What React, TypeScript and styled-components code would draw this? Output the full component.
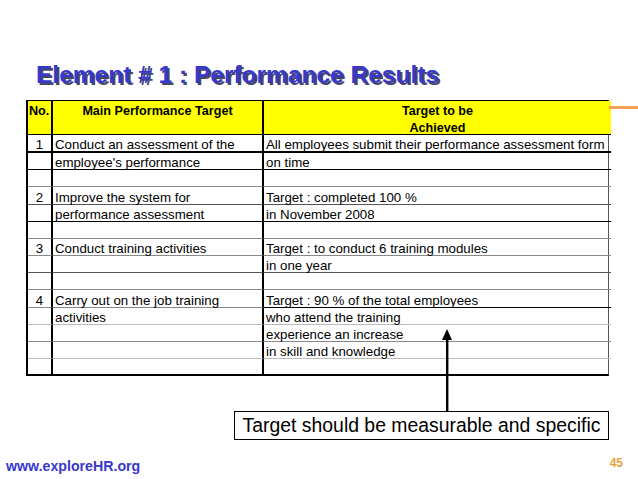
import React from "react";
import styled, { createGlobalStyle } from "styled-components";

const Global = createGlobalStyle`
  html, body { margin: 0; padding: 0; background: #ffffff; }
  body { font-family: "Liberation Sans", Arial, sans-serif; }
`;

const Slide = styled.div`
  position: relative;
  width: 638px;
  height: 479px;
  overflow: hidden;
  background: #ffffff;
  display: flex;
  flex-direction: column;
`;

const Title = styled.h1`
  margin: 61px 0 0 36px;
  height: 28px;
  font-family: "Liberation Sans", Arial, sans-serif;
  font-size: 24.5px;
  line-height: 28px;
  font-weight: 700;
  color: #3838cc;
  text-shadow: 2px 2px 0 rgba(20, 20, 60, 0.8);
  white-space: nowrap;
`;

const TableWrap = styled.div`
  position: relative;
  margin: 11px 0 0 26px;
  width: 583px;
`;

const Accent = styled.div`
  position: absolute;
  left: 583px;
  top: 6px;
  width: 40px;
  height: 3px;
  background: #f5a055;
`;

const Table = styled.div`
  display: grid;
  grid-template-columns: 25px 211px 347px;
  border-left: 2px solid #000;
  border-top: 1px solid #000;
  border-right: 1px solid #555;
  border-bottom: 2px solid #000;
  box-sizing: border-box;
  font-size: 13.3px;
  color: #000;
`;

const lineColors: Record<string, string> = {
  black: "2px solid #000",
  thin: "1px solid #000",
  dark: "1px solid #555",
  gray: "1px solid #888",
  light: "1px solid #bbb",
  none: "none",
};

const HeadCell = styled.div<{ $align: "left" | "center"; $last?: boolean }>`
  background: #ffff00;
  height: 34px;
  box-sizing: border-box;
  border-right: ${(p) => (p.$last ? "none" : "2px solid #000")};
  border-bottom: 1px solid #000;
  font-weight: 700;
  font-size: 12.6px;
  line-height: 17px;
  padding-top: 2px;
  padding-left: ${(p) => (p.$align === "left" ? "1px" : "0")};
  text-align: ${(p) => p.$align};
  white-space: nowrap;
`;

const Cell = styled.div<{ $h: number; $line: string; $center?: boolean; $last?: boolean }>`
  height: ${(p) => p.$h}px;
  box-sizing: border-box;
  border-right: ${(p) => (p.$last ? "none" : "2px solid #000")};
  border-bottom: ${(p) => lineColors[p.$line]};
  display: flex;
  align-items: center;
  justify-content: ${(p) => (p.$center ? "center" : "flex-start")};
  padding-left: ${(p) => (p.$center ? "0" : "2px")};
  padding-top: 4px;
  white-space: nowrap;
  line-height: 1;
`;

const Arrow = styled.svg`
  position: absolute;
  left: 415px;
  top: 229px;
`;

const Callout = styled.div`
  margin: 35px 0 0 234px;
  width: 375px;
  height: 29px;
  box-sizing: border-box;
  border: 1px solid #000;
  display: flex;
  align-items: center;
  justify-content: center;
  font-size: 19.4px;
  color: #000;
  white-space: nowrap;
`;

const Footer = styled.div`
  margin-top: 13px;
  display: flex;
  justify-content: space-between;
  align-items: flex-start;
  padding: 0 15px 0 6px;
`;

const Site = styled.div`
  margin-top: 5px;
  font-size: 14.2px;
  font-weight: 700;
  color: #3838cc;
`;

const PageNo = styled.div`
  margin-top: 3px;
  font-size: 12px;
  font-weight: 700;
  color: #e8a23a;
`;

type Row = { no: string; main: string; target: string; h: number; line: string; lineL?: string };

const rows: Row[] = [
  { no: "1", main: "Conduct an assessment of the", target: "All employees submit their performance assessment form", h: 18, line: "black" },
  { no: "", main: "employee's performance", target: "on time", h: 17, line: "thin" },
  { no: "", main: "", target: "", h: 17, line: "gray" },
  { no: "2", main: "Improve the system for", target: "Target : completed 100 %", h: 18, line: "dark" },
  { no: "", main: "performance assessment", target: "in November 2008", h: 17, line: "thin" },
  { no: "", main: "", target: "", h: 17, line: "gray" },
  { no: "3", main: "Conduct training activities", target: "Target : to conduct 6 training modules", h: 17, line: "gray" },
  { no: "", main: "", target: "in one year", h: 17, line: "dark" },
  { no: "", main: "", target: "", h: 17, line: "gray" },
  { no: "4", main: "Carry out on the job training", target: "Target : 90 % of the total employees", h: 18, line: "thin", lineL: "gray" },
  { no: "", main: "activities", target: "who attend the training", h: 17, line: "light" },
  { no: "", main: "", target: "experience an increase", h: 17, line: "gray" },
  { no: "", main: "", target: "in skill and knowledge", h: 17, line: "light" },
  { no: "", main: "", target: "", h: 15, line: "none" },
];

export default function App() {
  return (
    <>
      <Global />
      <Slide>
        <Title>Element # 1 : Performance Results</Title>
        <TableWrap>
          <Accent />
          <Table>
            <HeadCell $align="left">No.</HeadCell>
            <HeadCell $align="center">Main Performance Target</HeadCell>
            <HeadCell $align="center" $last>
              Target to be
              <br />
              Achieved
            </HeadCell>
            {rows.map((r, i) => (
              <React.Fragment key={i}>
                <Cell $h={r.h} $line={r.lineL ?? r.line} $center>
                  {r.no}
                </Cell>
                <Cell $h={r.h} $line={r.lineL ?? r.line}>
                  {r.main}
                </Cell>
                <Cell $h={r.h} $line={r.line} $last>
                  {r.target}
                </Cell>
              </React.Fragment>
            ))}
          </Table>
          <Arrow width="12" height="82" viewBox="0 0 12 82">
            <polygon points="6,0 1,11 11,11" fill="#000" />
            <rect x="5" y="8" width="2.4" height="74" fill="#000" />
          </Arrow>
        </TableWrap>
        <Callout>Target should be measurable and specific</Callout>
        <Footer>
          <Site>www.exploreHR.org</Site>
          <PageNo>45</PageNo>
        </Footer>
      </Slide>
    </>
  );
}
